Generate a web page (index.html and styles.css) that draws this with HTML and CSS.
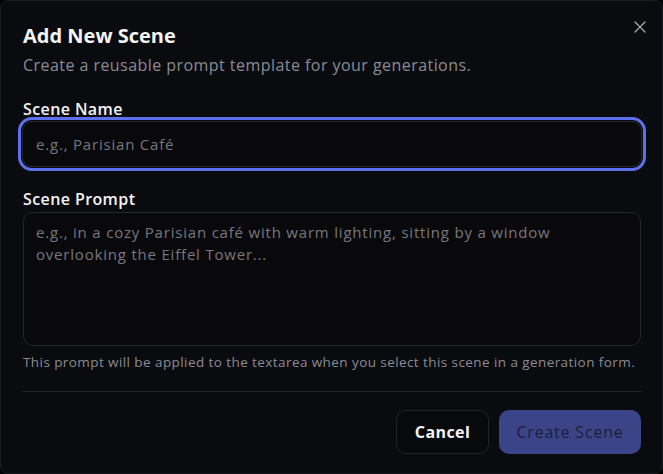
FILE: index.html
```html
<!DOCTYPE html>
<html lang="en">
<head>
    <meta charset="UTF-8">
    <meta name="viewport" content="width=device-width, initial-scale=1.0">
    <title>Add New Scene</title>
    <link rel="stylesheet" href="styles.css">
</head>
<body>

<div class="dialog">
    <button class="close" aria-label="Close">
        <svg width="12" height="12" viewBox="0 0 12 12" fill="none" stroke="currentColor" stroke-width="1.4" stroke-linecap="round">
            <path d="M1 1L11 11M11 1L1 11"/>
        </svg>
    </button>

    <h2 class="title">Add New Scene</h2>
    <p class="subtitle">Create a reusable prompt template for your generations.</p>

    <label class="label" for="sceneName">Scene Name</label>
    <input type="text" id="sceneName" class="field field-focus" placeholder="e.g., Parisian Café">

    <label class="label label-prompt" for="scenePrompt">Scene Prompt</label>
    <textarea id="scenePrompt" class="field area" placeholder="e.g., in a cozy Parisian café with warm lighting, sitting by a window overlooking the Eiffel Tower..."></textarea>
    <p class="hint">This prompt will be applied to the textarea when you select this scene in a generation form.</p>

    <div class="footer">
        <button class="btn btn-cancel">Cancel</button>
        <button class="btn btn-create">Create Scene</button>
    </div>
</div>

</body>
</html>
```

FILE: styles.css
```css
body {
    margin: 0;
    background-color: #000;
    font-family: "Open Sans", "Liberation Sans", sans-serif;
    color: #f4f4f5;
}
.dialog {
    position: relative;
    box-sizing: border-box;
    width: 663px;
    height: 474px;
    padding: 21px 21px 19px 22px;
    background-color: #0a0b0f;
    border: 1px solid #1c1d22;
    border-radius: 8px;
    display: flex;
    flex-direction: column;
}
.close {
    position: absolute;
    top: 20px;
    right: 16px;
    padding: 0;
    background: none;
    border: none;
    color: #a1a1aa;
    cursor: pointer;
    display: flex;
}
.title {
    margin: 0;
    font-size: 20px;
    font-weight: 700;
    line-height: 28px;
    letter-spacing: 0;
}
.subtitle {
    margin: 4px 0 0 0;
    font-size: 16px;
    line-height: 22px;
    color: #8b8b93;
    letter-spacing: 0.45px;
}
.label {
    margin-top: 22px;
    font-size: 16px;
    font-weight: 600;
    line-height: 22px;
    letter-spacing: 0.4px;
}
.label-prompt {
    margin-top: 21px;
}
.field {
    box-sizing: border-box;
    width: 618px;
    margin: 0;
    background-color: #09090c;
    border: 1px solid #26272c;
    border-radius: 10px;
    font-family: inherit;
    font-size: 15px;
    letter-spacing: 0.8px;
    color: #f4f4f5;
    outline: none;
}
.field::placeholder {
    color: #77777e;
}
.field-focus {
    width: 620px;
    height: 46px;
    margin: 1px 0 0 -1px;
    padding-left: 13px;
    padding-right: 13px;
    box-shadow: 0 0 0 1px #0a0b0f, 0 0 0 4px #5d70ee;
}
.area {
    height: 134px;
    margin-top: 2px;
    padding: 8px 12px;
    line-height: 22px;
    resize: none;
}
.hint {
    margin: 7px 0 0 0;
    font-size: 13.5px;
    line-height: 18px;
    letter-spacing: 0.42px;
    color: #8b8b93;
    white-space: nowrap;
}
.footer {
    margin-top: 20px;
    padding-top: 18px;
    border-top: 1px solid #222329;
    display: flex;
    justify-content: flex-end;
    gap: 10px;
}
.btn {
    height: 44px;
    border-radius: 10px;
    font-family: inherit;
    font-size: 16px;
    cursor: pointer;
}
.btn-cancel {
    width: 93px;
    background-color: #08090b;
    border: 1px solid #232429;
    color: #f4f4f5;
    font-weight: 700;
    letter-spacing: 0.4px;
}
.btn-create {
    width: 142px;
    background-color: #3b4486;
    border: none;
    color: #1b1e3d;
    font-weight: 500;
    letter-spacing: 0.8px;
}
```
